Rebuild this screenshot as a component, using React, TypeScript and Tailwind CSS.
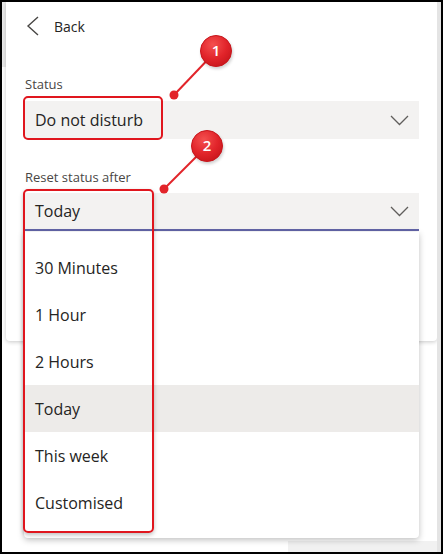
import React from "react";

const font = { fontFamily: '"Open Sans", "Noto Sans", Arial, sans-serif' };

const Chevron = () => (
    <svg width="19" height="11" viewBox="0 0 19 11" className="shrink-0">
        <polyline points="1,1 9.5,9.5 18,1" fill="none" stroke="#605e5c" strokeWidth="1.3" />
    </svg>
);

const options = ["30 Minutes", "1 Hour", "2 Hours", "Today", "This week", "Customised"];

const Marker = ({ cx, cy, dx, dy, n }: { cx: number; cy: number; dx: number; dy: number; n: string }) => (
    <g>
        <line x1={cx} y1={cy} x2={dx} y2={dy} stroke="#e2242a" strokeWidth="2" />
        <circle cx={dx} cy={dy} r="4.5" fill="#e2242a" />
        <circle cx={cx + 1} cy={cy + 2} r="16" fill="#000" opacity="0.18" filter="url(#blur)" />
        <circle cx={cx} cy={cy} r="15.5" fill="url(#redball)" stroke="#c8161c" strokeWidth="1" />
        <text x={cx} y={cy + 5} textAnchor="middle" fontSize="15" fontWeight="600" fill="#fff" style={font}>{n}</text>
    </g>
);

export default function App() {
    return (
        <div className="relative w-[443px] h-[554px] border-2 border-black bg-white overflow-hidden" style={font}>
            <div className="flex h-full">
                <div className="flex flex-col flex-1">
                    <div className="flex flex-1">
                        <div className="w-[4px] h-[65px] bg-[#e9e9e9]" />
                        <div className="w-[431px] h-[339px] bg-white rounded-b shadow-[0_1px_4px_rgba(0,0,0,0.22)] px-[18px] pt-[14px] flex flex-col">
                            <div className="flex items-center gap-[15px] pl-[2px] h-[20px]">
                                <svg width="13" height="20" viewBox="0 0 13 20">
                                    <polyline points="12,1 2,10 12,19" fill="none" stroke="#484644" strokeWidth="1.4" />
                                </svg>
                                <span className="text-[14px] text-[#252423]">Back</span>
                            </div>
                            <span className="mt-[39px] text-[13px] leading-[18px] text-[#484644] pl-[1px]">Status</span>
                            <div className="mt-[8px] h-[38px] bg-[#f3f2f1] flex items-center justify-between pl-[11px] pr-[10px]">
                                <span className="text-[16px] text-[#252423]">Do not disturb</span>
                                <Chevron />
                            </div>
                            <span className="mt-[29px] text-[13px] leading-[18px] text-[#484644] pl-[1px]">Reset status after</span>
                            <div className="mt-[7px] h-[38px] bg-[#f3f2f1] border-b-2 border-[#6264a7] flex items-center justify-between pl-[11px] pr-[10px]">
                                <span className="text-[16px] text-[#252423]">Today</span>
                                <Chevron />
                            </div>
                        </div>
                    </div>
                    <div className="flex h-[11px]">
                        <div className="w-[286px] bg-white" />
                        <div className="flex-1 bg-[#f1f1f1]" />
                    </div>
                </div>
                <div className="w-[4px] bg-[#e4e4e4]" />
            </div>

            <ul className="absolute left-[22px] top-[230px] w-[395px] py-[12px] bg-white rounded-b shadow-[0_2px_6px_rgba(0,0,0,0.25)]">
                {options.map((o) => (
                    <li key={o} className={`h-[47px] flex items-center pl-[11px] text-[16px] text-[#252423] ${o === "Today" ? "bg-[#edebe9]" : ""}`}>
                        {o}
                    </li>
                ))}
            </ul>

            <div className="absolute left-[21px] top-[94px] w-[140px] h-[44px] border-2 border-[#e0161e] rounded-[5px]" />
            <div className="absolute left-[21px] top-[187px] w-[131px] h-[344px] border-2 border-[#e0161e] rounded-[5px] shadow-[0_2px_4px_rgba(0,0,0,0.25)]" />

            <svg className="absolute left-0 top-0" width="443" height="554" viewBox="-2 -2 443 554">
                <defs>
                    <radialGradient id="redball" cx="0.4" cy="0.3" r="0.75">
                        <stop offset="0" stopColor="#f4504f" />
                        <stop offset="0.6" stopColor="#e1242a" />
                        <stop offset="1" stopColor="#c8161c" />
                    </radialGradient>
                    <filter id="blur"><feGaussianBlur stdDeviation="1.5" /></filter>
                </defs>
                <Marker cx={212} cy={47} dx={170} dy={91} n="1" />
                <Marker cx={203} cy={142} dx={160} dy={185} n="2" />
            </svg>
        </div>
    );
}
